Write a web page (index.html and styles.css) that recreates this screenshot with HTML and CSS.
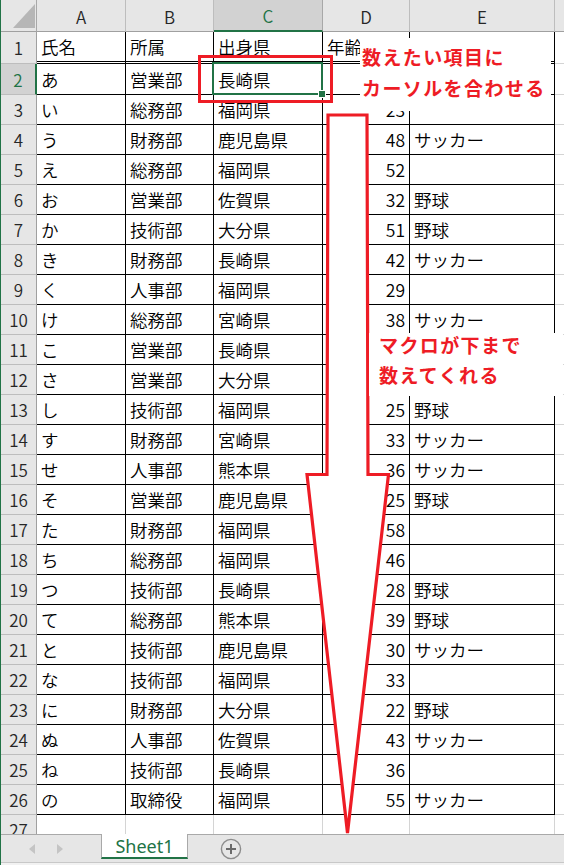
FILE: index.html
```html
<!DOCTYPE html>
<html lang="ja">
<head>
<meta charset="utf-8">
<link rel="stylesheet" href="styles.css">
</head>
<body>
<div class="app">
  <div class="sheet">
    <div class="grid">
      <div class="corner"><div class="tri"></div></div>
      <div class="ch">A</div><div class="ch">B</div><div class="ch sel">C</div><div class="ch">D</div><div class="ch">E</div><div class="ch fh"></div>

      <div class="rh">1</div><div class="c r1">氏名</div><div class="c r1">所属</div><div class="c r1">出身県</div><div class="c r1">年齢</div><div class="c r1"></div><div class="f"></div>
      <div class="rh sel">2</div><div class="c">あ</div><div class="c">営業部</div><div class="c">長崎県</div><div class="c n"></div><div class="c"></div><div class="f"></div>
      <div class="rh">3</div><div class="c">い</div><div class="c">総務部</div><div class="c">福岡県</div><div class="c n">23</div><div class="c"></div><div class="f"></div>
      <div class="rh">4</div><div class="c">う</div><div class="c">財務部</div><div class="c">鹿児島県</div><div class="c n">48</div><div class="c">サッカー</div><div class="f"></div>
      <div class="rh">5</div><div class="c">え</div><div class="c">総務部</div><div class="c">福岡県</div><div class="c n">52</div><div class="c"></div><div class="f"></div>
      <div class="rh">6</div><div class="c">お</div><div class="c">営業部</div><div class="c">佐賀県</div><div class="c n">32</div><div class="c">野球</div><div class="f"></div>
      <div class="rh">7</div><div class="c">か</div><div class="c">技術部</div><div class="c">大分県</div><div class="c n">51</div><div class="c">野球</div><div class="f"></div>
      <div class="rh">8</div><div class="c">き</div><div class="c">財務部</div><div class="c">長崎県</div><div class="c n">42</div><div class="c">サッカー</div><div class="f"></div>
      <div class="rh">9</div><div class="c">く</div><div class="c">人事部</div><div class="c">福岡県</div><div class="c n">29</div><div class="c"></div><div class="f"></div>
      <div class="rh">10</div><div class="c">け</div><div class="c">総務部</div><div class="c">宮崎県</div><div class="c n">38</div><div class="c">サッカー</div><div class="f"></div>
      <div class="rh">11</div><div class="c">こ</div><div class="c">営業部</div><div class="c">長崎県</div><div class="c n"></div><div class="c"></div><div class="f"></div>
      <div class="rh">12</div><div class="c">さ</div><div class="c">営業部</div><div class="c">大分県</div><div class="c n"></div><div class="c"></div><div class="f"></div>
      <div class="rh">13</div><div class="c">し</div><div class="c">技術部</div><div class="c">福岡県</div><div class="c n">25</div><div class="c">野球</div><div class="f"></div>
      <div class="rh">14</div><div class="c">す</div><div class="c">財務部</div><div class="c">宮崎県</div><div class="c n">33</div><div class="c">サッカー</div><div class="f"></div>
      <div class="rh">15</div><div class="c">せ</div><div class="c">人事部</div><div class="c">熊本県</div><div class="c n">36</div><div class="c">サッカー</div><div class="f"></div>
      <div class="rh">16</div><div class="c">そ</div><div class="c">営業部</div><div class="c">鹿児島県</div><div class="c n">25</div><div class="c">野球</div><div class="f"></div>
      <div class="rh">17</div><div class="c">た</div><div class="c">財務部</div><div class="c">福岡県</div><div class="c n">58</div><div class="c"></div><div class="f"></div>
      <div class="rh">18</div><div class="c">ち</div><div class="c">総務部</div><div class="c">福岡県</div><div class="c n">46</div><div class="c"></div><div class="f"></div>
      <div class="rh">19</div><div class="c">つ</div><div class="c">技術部</div><div class="c">長崎県</div><div class="c n">28</div><div class="c">野球</div><div class="f"></div>
      <div class="rh">20</div><div class="c">て</div><div class="c">総務部</div><div class="c">熊本県</div><div class="c n">39</div><div class="c">野球</div><div class="f"></div>
      <div class="rh">21</div><div class="c">と</div><div class="c">技術部</div><div class="c">鹿児島県</div><div class="c n">30</div><div class="c">サッカー</div><div class="f"></div>
      <div class="rh">22</div><div class="c">な</div><div class="c">技術部</div><div class="c">福岡県</div><div class="c n">33</div><div class="c"></div><div class="f"></div>
      <div class="rh">23</div><div class="c">に</div><div class="c">財務部</div><div class="c">大分県</div><div class="c n">22</div><div class="c">野球</div><div class="f"></div>
      <div class="rh">24</div><div class="c">ぬ</div><div class="c">人事部</div><div class="c">佐賀県</div><div class="c n">43</div><div class="c">サッカー</div><div class="f"></div>
      <div class="rh">25</div><div class="c">ね</div><div class="c">技術部</div><div class="c">長崎県</div><div class="c n">36</div><div class="c"></div><div class="f"></div>
      <div class="rh">26</div><div class="c">の</div><div class="c">取締役</div><div class="c">福岡県</div><div class="c n">55</div><div class="c">サッカー</div><div class="f"></div>
      <div class="rh">27</div><div class="e"></div><div class="e"></div><div class="e"></div><div class="e"></div><div class="e"></div><div class="e last"></div>
    </div>

    <div class="overlay">
      <div class="selbox"></div>
      <div class="handle"></div>
      <div class="redrect"></div>
      <svg class="arrow" width="564" height="834" viewBox="0 0 564 834">
        <path d="M328 115 L367 115 L368 474.5 L388.5 474.5 L347.5 833 L307 474.5 L327 474.5 Z" fill="#fff" stroke="#ee1c25" stroke-width="3.2" stroke-linejoin="miter"/>
      </svg>
      <div class="callout c1"><div class="ct">数えたい項目に<br>カーソルを合わせる</div></div>
      <div class="callout c2"><div class="ct">マクロが下まで<br>数えてくれる</div></div>
    </div>
  </div>
  <div class="tabbar">
    <div class="nav"><span class="tl"></span><span class="tr"></span></div>
    <div class="tab">Sheet1</div>
    <div class="add">
      <svg width="22" height="22" viewBox="0 0 22 22">
        <circle cx="11" cy="11" r="9.6" fill="none" stroke="#8c8c8c" stroke-width="1.4"/>
        <path d="M11 6 V16 M6 11 H16" stroke="#6a6a6a" stroke-width="2"/>
      </svg>
    </div>
  </div>
  <div class="strip"></div>
</div>
</body>
</html>
```

FILE: styles.css
```css
html, body {
  margin: 0;
  padding: 0;
}
body {
  width: 564px;
  height: 865px;
  overflow: hidden;
  background: #fff;
  font-family: "Noto Sans CJK JP", "Noto Sans", sans-serif;
  color: #000;
}
.app {
  display: flex;
  flex-direction: column;
  height: 865px;
  border-left: 1px solid #217346;
  box-sizing: border-box;
}
.sheet {
  position: relative;
  height: 834px;
  flex: none;
  overflow: hidden;
}
.grid {
  display: grid;
  grid-template-columns: 36px 89px 88px 109px 87px 145px 1fr;
  grid-template-rows: 32px 32px 31px repeat(24, 30px) 30px;
}
.grid > div {
  box-sizing: border-box;
  min-width: 0;
}
.corner {
  background: #e6e6e6;
  border-right: 1px solid #a8a8a8;
  border-bottom: 1px solid #a0a0a0;
  display: flex;
  justify-content: flex-end;
  align-items: flex-end;
  padding: 0 1px 3px 0;
}
.tri {
  width: 0;
  height: 0;
  border-left: 22px solid transparent;
  border-bottom: 24px solid #b6b6b6;
}
.ch {
  background: #e6e6e6;
  border-right: 1px solid #bdbdbd;
  border-bottom: 1px solid #a0a0a0;
  display: flex;
  align-items: center;
  justify-content: center;
  font-size: 17px;
  font-weight: 350;
  color: #262626;
  padding-top: 1px;
}
.ch.sel {
  background: #d2d2d2;
  color: #217346;
  border-bottom: 2px solid #217346;
  border-right-color: #a8a8a8;
}
.ch.fh {
  border-right: none;
}
.rh {
  background: #e6e6e6;
  border-right: 1px solid #a0a0a0;
  border-bottom: 1px solid #bdbdbd;
  display: flex;
  align-items: center;
  justify-content: center;
  font-size: 17px;
  font-weight: 350;
  color: #262626;
}
.rh.sel {
  background: #d2d2d2;
  color: #217346;
  border-right: 2px solid #217346;
}
.c {
  border-right: 1px solid #000;
  border-bottom: 1px solid #000;
  display: flex;
  align-items: center;
  padding: 0 4px;
  font-size: 17.5px;
  font-weight: 350;
  white-space: nowrap;
  overflow: visible;
}
.c.r1 {
  border-bottom: 3px double #000;
}
.c.n {
  justify-content: flex-end;
}
.f {
  border-bottom: 1px solid #d4d4d4;
}
.e {
  border-right: 1px solid #d4d4d4;
}
.e.last {
  border-right: none;
}

.overlay {
  position: absolute;
  left: -1px;
  top: 0;
  width: 564px;
  height: 834px;
}
.selbox {
  position: absolute;
  left: 212px;
  top: 62px;
  width: 111px;
  height: 33px;
  border: 2px solid #217346;
  box-sizing: border-box;
}
.handle {
  position: absolute;
  left: 319px;
  top: 91px;
  width: 6px;
  height: 6px;
  background: #217346;
  outline: 1px solid #fff;
}
.redrect {
  position: absolute;
  left: 198px;
  top: 55px;
  width: 135px;
  height: 48px;
  border: 3px solid #ee1c25;
  box-sizing: border-box;
}
.arrow {
  position: absolute;
  left: 0;
  top: 0;
}
.callout {
  position: absolute;
  background: #fff;
  box-sizing: border-box;
  color: #ee1c25;
  font-weight: 700;
  font-size: 19px;
  letter-spacing: 1.4px;
  white-space: nowrap;
}
.c1 {
  left: 360px;
  top: 38px;
  width: 191px;
  height: 73px;
  padding: 3px 0 0 2px;
  line-height: 31px;
}
.c2 {
  left: 369px;
  top: 333px;
  width: 194px;
  height: 63px;
  padding: 0 0 0 10px;
  line-height: 30px;
}
.c2 .ct {
  margin-top: -3px;
}

.tabbar {
  flex: none;
  height: 28px;
  border-top: 1px solid #a9a9a9;
  background: #e6e6e6;
  display: flex;
  align-items: flex-start;
  box-sizing: border-box;
}
.nav {
  width: 100px;
  height: 27px;
  display: flex;
  align-items: center;
  padding-left: 28px;
  gap: 22px;
  box-sizing: border-box;
}
.tl {
  width: 0;
  height: 0;
  border-top: 5px solid transparent;
  border-bottom: 5px solid transparent;
  border-right: 6px solid #c4c4c4;
}
.tr {
  width: 0;
  height: 0;
  border-top: 5px solid transparent;
  border-bottom: 5px solid transparent;
  border-left: 6px solid #c4c4c4;
}
.tab {
  width: 87px;
  height: 25px;
  background: #fff;
  border-left: 1px solid #a9a9a9;
  border-right: 1px solid #a9a9a9;
  border-bottom: 2px solid #217346;
  box-sizing: border-box;
  display: flex;
  align-items: center;
  justify-content: center;
  font-family: "Noto Sans", "Open Sans", sans-serif;
  font-size: 18px;
  color: #217346;
  margin-top: -1px;
}
.add {
  margin-left: 32px;
  height: 27px;
  display: flex;
  align-items: center;
}
.strip {
  flex: 1;
  border-top: 1px solid #c8c8c8;
  background: #f2f2f2;
}
```
